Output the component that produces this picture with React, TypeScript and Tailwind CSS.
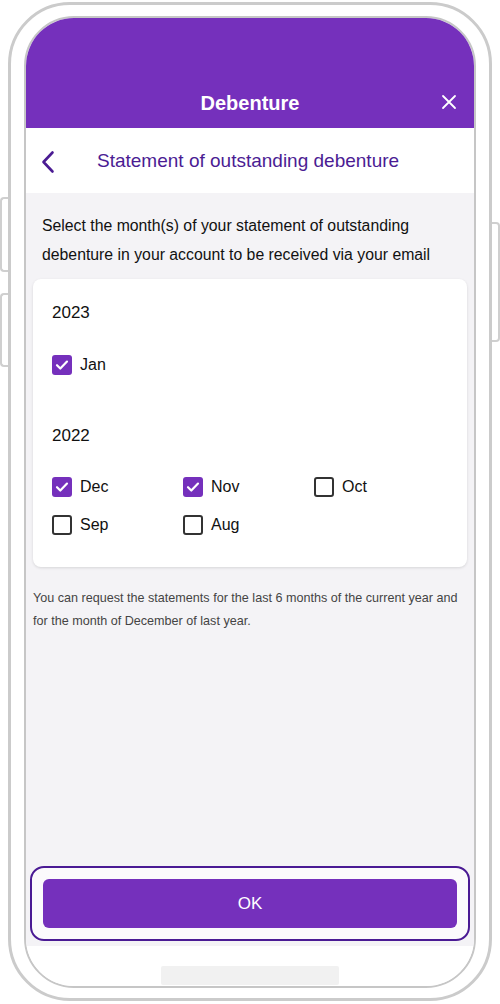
import { useState } from "react";

const PURPLE = "bg-[#7530bc]";

function Checkbox({ label, checked, onToggle }: { label: string; checked: boolean; onToggle: () => void }) {
  return (
    <button type="button" onClick={onToggle} className="flex items-center h-6 text-left">
      {checked ? (
        <span className={`w-5 h-5 rounded-[3px] ${PURPLE} flex items-center justify-center`}>
          <svg viewBox="0 0 20 20" className="w-5 h-5" fill="none" stroke="white" strokeWidth={2.2} strokeLinecap="round" strokeLinejoin="round">
            <path d="M5 10.2l3.3 3.3L15 6.6" />
          </svg>
        </span>
      ) : (
        <span className="w-5 h-5 rounded-[3px] border-2 border-[#333] bg-white" />
      )}
      <span className="ml-[8px] text-[16px] text-[#111]">{label}</span>
    </button>
  );
}

export default function App() {
  const [selected, setSelected] = useState<Record<string, boolean>>({
    Jan: true,
    Dec: true,
    Nov: true,
    Oct: false,
    Sep: false,
    Aug: false,
  });

  const toggle = (m: string) => setSelected((s) => ({ ...s, [m]: !s[m] }));

  return (
    <div className="relative w-[500px] h-[1004px] bg-white overflow-hidden" style={{ fontFamily: '"Liberation Sans", Arial, sans-serif' }}>
      {/* side buttons */}
      <div className="absolute left-0 top-[197px] w-[10px] h-[75px] border-[2px] border-r-0 border-[#cfcfcf] rounded-l-[4px] bg-white" />
      <div className="absolute left-0 top-[293px] w-[10px] h-[74px] border-[2px] border-r-0 border-[#cfcfcf] rounded-l-[4px] bg-white" />
      <div className="absolute right-0 top-[222px] w-[10px] h-[120px] border-[2px] border-l-0 border-[#cfcfcf] rounded-r-[4px] bg-white" />

      {/* phone frame */}
      <div className="relative ml-[8px] mt-[2px] w-[484px] h-[999px] border-[3px] border-[#cbcbcb] rounded-[62px] bg-white pt-[11px] pl-[13px] pr-[13px] pb-[10px]">
        <div className="w-[452px] h-[972px] border-[2px] border-[#c6c6c6] rounded-[50px] overflow-hidden flex flex-col bg-white">
          {/* header */}
          <div className={`h-[110px] ${PURPLE} relative flex items-end justify-center pb-[13px]`}>
            <span className="text-white text-[20px] font-bold leading-6">Debenture</span>
            <button type="button" className="absolute right-[16px] bottom-[17px] w-[18px] h-[18px] flex items-center justify-center">
              <svg viewBox="0 0 16 16" className="w-[16px] h-[16px]" fill="none" stroke="white" strokeWidth={1.8} strokeLinecap="round">
                <path d="M2 2l12 12M14 2L2 14" />
              </svg>
            </button>
          </div>

          {/* sub header */}
          <div className="h-[65px] bg-white flex items-center pt-[2px]">
            <button type="button" className="ml-[15px] w-[14px] h-[24px] flex items-center">
              <svg viewBox="0 0 14 24" className="w-[14px] h-[24px]" fill="none" stroke="#4b1c93" strokeWidth={2.6} strokeLinecap="round" strokeLinejoin="round">
                <path d="M11.5 2.5L2.5 12l9 9.5" />
              </svg>
            </button>
            <span className="ml-[42px] text-[19px] text-[#4b1c93]">Statement of outstanding debenture</span>
          </div>

          {/* body */}
          <div className="flex-1 bg-[#f4f3f6] flex flex-col px-[7px] pt-[18px] pb-[5px]">
            <p className="px-[9px] text-[15.8px] leading-[29px] text-[#111]">
              Select the month(s) of your statement of outstanding debenture in your account to be received via your email
            </p>

            <div className="mt-[10px] bg-white rounded-[8px] shadow-[0_1px_3px_rgba(0,0,0,0.12)] pl-[19px] pr-4 pt-[22px] pb-[30px]">
              <div className="text-[17px] leading-6 text-[#111]">2023</div>
              <div className="mt-[28px] grid grid-cols-[131px_131px_131px]">
                <Checkbox label="Jan" checked={selected.Jan} onToggle={() => toggle("Jan")} />
              </div>
              <div className="mt-[47px] text-[17px] leading-6 text-[#111]">2022</div>
              <div className="mt-[27px] grid grid-cols-[131px_131px_131px] gap-y-[14px]">
                {["Dec", "Nov", "Oct", "Sep", "Aug"].map((m) => (
                  <Checkbox key={m} label={m} checked={selected[m]} onToggle={() => toggle(m)} />
                ))}
              </div>
            </div>

            <p className="mt-[20px] text-[12.6px] leading-[23px] text-[#444]">
              You can request the statements for the last 6 months of the current year and for the month of December of last year.
            </p>

            <div className="mt-auto mx-[-3px] border-[2px] border-[#4a1a94] rounded-[14px] bg-[#fbfafc] p-[11px]">
              <button type="button" className={`w-full h-[49px] rounded-[6px] ${PURPLE} text-white text-[17px]`}>
                OK
              </button>
            </div>
          </div>

          {/* home indicator */}
          <div className="h-[40px] bg-white flex justify-center pt-[20px]">
            <div className="w-[178px] h-[19px] bg-[#f1f1f1] rounded-[2px]" />
          </div>
        </div>
      </div>
    </div>
  );
}
